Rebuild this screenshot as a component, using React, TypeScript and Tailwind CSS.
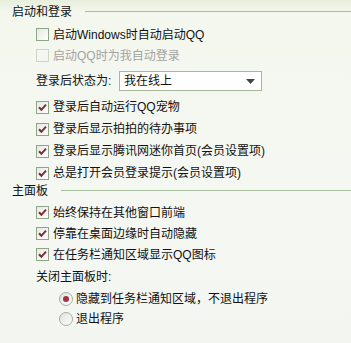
import React from 'react';

const FONT = "font-['Liberation_Sans','Noto_Sans_CJK_SC',sans-serif]";

const Check = ({ checked, disabled }: { checked?: boolean; disabled?: boolean }) => (
  <span
    className={`w-[13px] h-[13px] shrink-0 border flex items-center justify-center ${
      disabled
        ? 'border-[#cdd6c6] bg-[#f4f7f1]'
        : 'border-[#8fa585] bg-[linear-gradient(135deg,#e6eae2,#ffffff)]'
    }`}
  >
    {checked && (
      <svg width="9" height="9" viewBox="0 0 9 9">
        <path d="M1 4.2 L3.4 6.8 L8 1.6" fill="none" stroke="#7b2d3a" strokeWidth="2" />
      </svg>
    )}
  </span>
);

const Radio = ({ checked }: { checked?: boolean }) => (
  <span className="w-[14px] h-[14px] shrink-0 rounded-full border border-[#a3ae9f] bg-[linear-gradient(135deg,#dfe3dc,#ffffff)] flex items-center justify-center">
    {checked && <span className="w-[6px] h-[6px] rounded-full bg-[#9e3444]" />}
  </span>
);

const Header = ({ title, className }: { title: string; className: string }) => (
  <div className={`flex items-center pl-[12px] ${className}`}>
    <span className="text-[12px] text-[#111] leading-none">{title}</span>
    <div className="flex-1 ml-[13px] h-[2px] border-t border-[#a9bfa0] border-b-white" />
  </div>
);

const Row = ({ label, checked, disabled, h = 'h-[21px]' }: { label: string; checked?: boolean; disabled?: boolean; h?: string }) => (
  <div className={`flex items-center pl-[36px] gap-[4px] ${h}`}>
    <Check checked={checked} disabled={disabled} />
    <span className={`text-[12px] leading-none ${disabled ? 'text-[#a3a3a3]' : 'text-[#111]'}`}>{label}</span>
  </div>
);

export default function App() {
  return (
    <div
      className={`w-[351px] h-[343px] overflow-hidden pt-[2px] ${FONT} bg-[linear-gradient(to_bottom,#e7efdb_0px,#f3f7ee_12px,#f5f8f2_60%,#f3f5f1_100%)]`}
    >
      <Header title="启动和登录" className="h-[20px]" />
      <div className="mt-[2px]">
        <Row label="启动Windows时自动启动QQ" />
        <Row label="启动QQ时为我自动登录" disabled />
      </div>
      <div className="flex items-center pl-[36px] h-[20px] mt-[5px]">
        <span className="w-[83px] text-[12px] leading-none text-[#111]">登录后状态为:</span>
        <div className="w-[143px] h-[20px] bg-white border border-[#a5b99a] flex items-center justify-between pl-[4px] pr-[6px]">
          <span className="text-[12px] leading-none text-[#111]">我在线上</span>
          <svg width="9" height="5" viewBox="0 0 9 5">
            <path d="M0 0 H9 L4.5 5 Z" fill="#444" />
          </svg>
        </div>
      </div>
      <div className="mt-[5px]">
        <Row label="登录后自动运行QQ宠物" checked h="h-[22px]" />
        <Row label="登录后显示拍拍的待办事项" checked h="h-[22px]" />
        <Row label="登录后显示腾讯网迷你首页(会员设置项)" checked h="h-[22px]" />
        <Row label="总是打开会员登录提示(会员设置项)" checked h="h-[22px]" />
      </div>
      <Header title="主面板" className="h-[14px]" />
      <div className="mt-[4px]">
        <Row label="始终保持在其他窗口前端" checked />
        <Row label="停靠在桌面边缘时自动隐藏" checked />
        <Row label="在任务栏通知区域显示QQ图标" checked />
      </div>
      <div className="flex items-center pl-[36px] h-[22px] mt-[1px]">
        <span className="text-[12px] leading-none text-[#111]">关闭主面板时:</span>
      </div>
      <div className="flex items-center pl-[59px] gap-[3px] h-[21px]">
        <Radio checked />
        <span className="text-[12px] leading-none text-[#111]">隐藏到任务栏通知区域，不退出程序</span>
      </div>
      <div className="flex items-center pl-[59px] gap-[3px] h-[20px]">
        <Radio />
        <span className="text-[12px] leading-none text-[#111]">退出程序</span>
      </div>
    </div>
  );
}
